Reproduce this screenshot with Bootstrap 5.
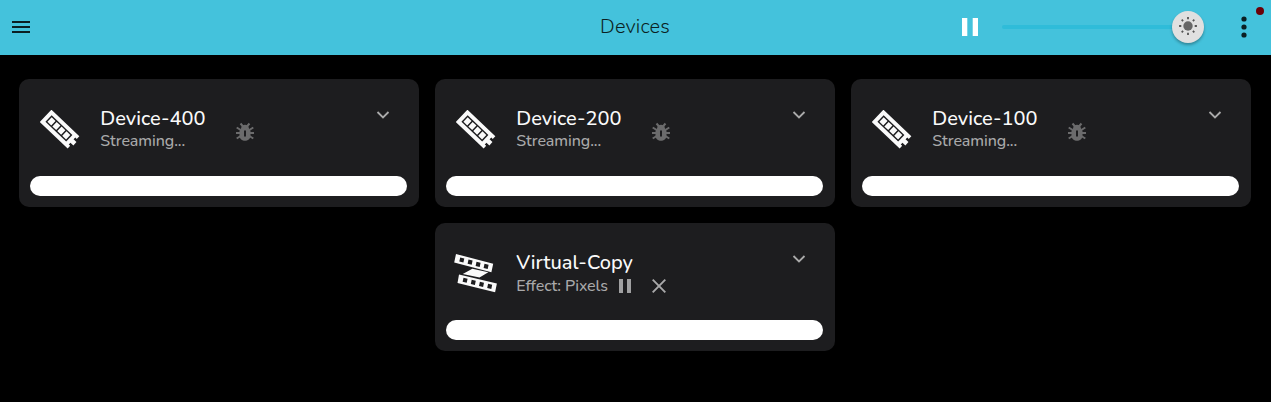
<!DOCTYPE html>
<html lang="en">
<head>
<meta charset="utf-8">
<meta name="viewport" content="width=device-width, initial-scale=1">
<title>Devices</title>
<link href="https://cdn.jsdelivr.net/npm/bootstrap@5.3.0/dist/css/bootstrap.min.css" rel="stylesheet">
<style>
body{background:#000;font-family:Nunito,Lato,"Open Sans",sans-serif;height:402px;overflow:hidden}
svg{display:block;flex:none}
.topbar{height:55px;padding-bottom:1px;background:#44c2dc;color:#0b1f23;display:grid;grid-template-columns:1fr auto 1fr}
.topbar h1{font-size:20px;font-weight:300;line-height:30px;letter-spacing:.15px;margin:0 1px 0 0}
.menu{margin-left:12px}
.bright{width:186px;height:32px;margin-left:24px}
.track{height:4px;border-radius:2px;background:#2fbcd9}
.knob{width:32px;height:32px;right:-16px;top:-14px;background:#e0e0e0;box-shadow:0 2px 3px rgba(0,0,0,.3)}
.alert-dot{width:8px;height:8px;right:7px;top:7px;background:#6b0009}
.devices{gap:16px;padding:24px 20px 0 19px}
.device{width:400px;height:128px;background:#1d1d1f;border-radius:10px;border:0;padding:24px 12px 11px 11px}
.pic{width:70.3px;padding-left:10px;padding-top:7px}
.pic.virt{padding-left:7px}
.name{font-size:20px;line-height:29px;color:#fafafa;font-weight:500;padding-top:1px}
.state{font-size:16px;line-height:16px;color:#a9a9aa;font-weight:500;letter-spacing:-.07px}
.state.fx{line-height:18px}
.bar{height:20px;border-radius:10px;background:#fff}
.bug{margin:19px 0 0}
.info{width:134.700px}
.chev{margin:7px 17px 0 auto}
</style>
</head>
<body>
<svg width="0" height="0" class="position-absolute">
<symbol id="strip" viewBox="0 0 40 40"><g transform="translate(.2 11.500) rotate(43.500)"><path fill="#fafafa" d="M0-16.300H38.500V-12.500H36.500V-10H40.500V-5.500H36.500V-3H38.500V.7H0z"/><path fill="#1d1d1f" d="M4-12.400h28.600v9H4z"/><path fill="#fafafa" d="M5.400-11h5.300v6.200h-5.300zM12.200-11h5.300v6.200h-5.300zM19-11h5.300v6.200H19zM25.800-11h5.300v6.200h-5.300z"/></g></symbol>
<symbol id="copy" viewBox="0 0 44 40"><g fill="#fafafa"><path d="M3 .1 40.200 9.800 38.400 18.300 1.200 8.500zM19.300 14.800l16 3.400-8.800 5.300L9.800 20zM6 20.400l37.900 9.200L42.100 38.300 4.500 29z"/></g><g fill="#1d1d1f"><path d="m7.200 3.500 4.100 1-.9 4.100-4.100-1zM15.500 5.600l4.100 1-.9 4.100-4.100-1zM23.500 7.800l4.100 1-.9 4.100-4.100-1zM31.500 9.800l4.100 1-.9 4.100-4.100-1z"/><path d="m10.500 23.700 4.100 1-.9 4.100-4.100-1zM18.700 25.800l4.100 1-.9 4.100-4.100-1zM26.900 27.800l4.100 1-.9 4.100-4.100-1zM35.100 29.800l4.100 1-.9 4.100-4.100-1z"/></g></symbol>
<symbol id="bug" viewBox="0 0 20 20"><g fill="none" stroke="#6b6b6c" stroke-width="2"><path d="m5.500 1.500 2.600 3M14.500 1.500l-2.600 3M1.700 5.500l4 2.500M18.300 5.500l-4 2.500M1 11h4M15 11h4M1.700 16.500l4-2.500M18.300 16.500l-4-2.500"/></g><path fill="#6b6b6c" fill-rule="evenodd" d="M6.200 6C6.200 1.700 13.800 1.700 13.800 6L15.500 9v4.500c0 7-11 7-11 0V9zM9 8.500v6h2v-6z"/></symbol>
<symbol id="chevron" viewBox="0 0 14 10"><path d="m1.500 2 5.500 5.500L12.500 2" fill="none" stroke="#aaa" stroke-width="1.800"/></symbol>
</svg>

<nav class="topbar align-items-center position-relative">
  <svg width="18" height="12" class="menu" fill="#0b1f23"><path d="M0 0h18v2H0zM0 5h18v2H0zM0 10h18v2H0z"/></svg>
  <h1>Devices</h1>
  <div class="d-flex align-items-center justify-content-end pe-4">
    <svg width="16" height="18" fill="#fff"><path d="M0 0h5.300v18H0zM10.700 0H16v18h-5.300z"/></svg>
    <div class="bright d-flex flex-column justify-content-center"><div class="track position-relative"><div class="knob rounded-circle position-absolute d-flex align-items-center justify-content-center">
      <svg width="20" height="20" viewBox="-10 -10 20 20" style="margin-top:-2px;margin-right:1px"><circle r="4.700" fill="#666"/><g stroke="#555" stroke-width="1.800"><path d="M0-8.900v2.200M0 6.700v2.200M-8.900 0h2.200M6.700 0h2.200M-6.300-6.300l1.400 1.400M4.900 4.900l1.400 1.400M-6.300 6.300l1.400-1.400M4.900-4.900l1.400-1.400"/></g></svg>
    </div></div></div>
    <svg width="6" height="22" style="margin-left:53px" fill="#0b1f23"><circle cx="3" cy="3" r="2.600"/><circle cx="3" cy="11" r="2.600"/><circle cx="3" cy="19" r="2.600"/></svg>
  </div>
  <span class="alert-dot position-absolute rounded-circle"></span>
</nav>

<main class="devices d-flex flex-wrap justify-content-center">
  <section class="card device justify-content-between">
    <div class="d-flex align-items-start"><div class="pic"><svg width="40" height="40"><use href="#strip"/></svg></div>
      <div class="info"><div class="name">Device-400</div><div class="state">Streaming...</div></div>
      <svg class="bug" width="20" height="20"><use href="#bug"/></svg><svg class="chev" width="14" height="10"><use href="#chevron"/></svg></div>
    <div class="bar"></div>
  </section>
  <section class="card device justify-content-between">
    <div class="d-flex align-items-start"><div class="pic"><svg width="40" height="40"><use href="#strip"/></svg></div>
      <div class="info"><div class="name">Device-200</div><div class="state">Streaming...</div></div>
      <svg class="bug" width="20" height="20"><use href="#bug"/></svg><svg class="chev" width="14" height="10"><use href="#chevron"/></svg></div>
    <div class="bar"></div>
  </section>
  <section class="card device justify-content-between">
    <div class="d-flex align-items-start"><div class="pic"><svg width="40" height="40"><use href="#strip"/></svg></div>
      <div class="info"><div class="name">Device-100</div><div class="state">Streaming...</div></div>
      <svg class="bug" width="20" height="20"><use href="#bug"/></svg><svg class="chev" width="14" height="10"><use href="#chevron"/></svg></div>
    <div class="bar"></div>
  </section>
  <section class="card device justify-content-between">
    <div class="d-flex align-items-start"><div class="pic virt"><svg width="44" height="40"><use href="#copy"/></svg></div>
      <div><div class="name">Virtual-Copy</div>
        <div class="d-flex align-items-center"><div class="state fx">Effect: Pixels</div>
        <svg class="ms-2" width="16" height="14" fill="#a0a0a1"><path d="M3 0h4v14H3zM11 0h4v14h-4z"/></svg>
        <svg width="14" height="14" style="margin-left:20px"><path d="m.7.7 12.600 12.600M13.300.7.7 13.300" stroke="#a9a9aa" stroke-width="1.900"/></svg></div></div>
      <svg class="chev" width="14" height="10"><use href="#chevron"/></svg></div>
    <div class="bar"></div>
  </section>
</main>
<script src="https://cdn.jsdelivr.net/npm/bootstrap@5.3.0/dist/js/bootstrap.bundle.min.js"></script>
</body>
</html>
